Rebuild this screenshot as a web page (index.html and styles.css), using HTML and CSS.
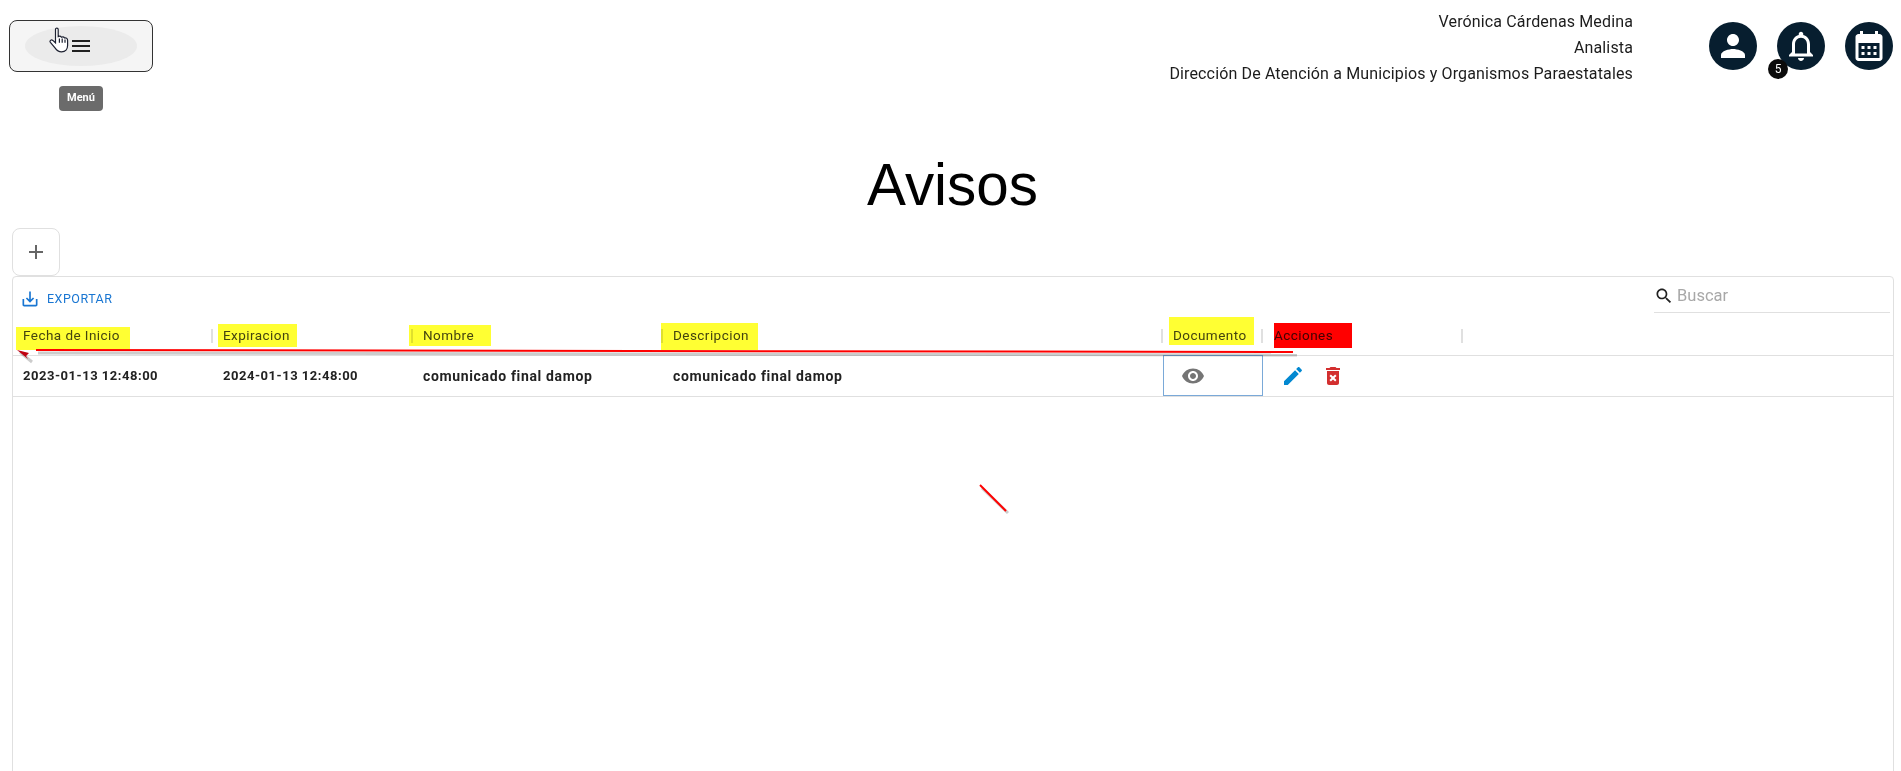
FILE: index.html
```html
<!DOCTYPE html>
<html lang="es">
<head>
    <meta charset="UTF-8">
    <meta name="viewport" content="width=device-width, initial-scale=1.0">
    <title>Avisos</title>
    <link rel="stylesheet" href="styles.css">
</head>
<body>
    <header class="topbar">
        <div class="menu-area">
            <button class="menu-button">
                <span class="menu-ripple">
                    <svg class="menu-icon" viewBox="0 0 24 24"><path d="M3 18h18v-2H3v2zm0-5h18v-2H3v2zm0-7v2h18V6H3z"/></svg>
                </span>
            </button>
            <span class="menu-tooltip">Menú</span>
        </div>
        <div class="user-info">
            <div>Verónica Cárdenas Medina</div>
            <div>Analista</div>
            <div>Dirección De Atención a Municipios y Organismos Paraestatales</div>
        </div>
        <div class="round-icons">
            <span class="round-icon">
                <svg viewBox="0 0 24 24"><path d="M12 12c2.21 0 4-1.79 4-4s-1.79-4-4-4-4 1.79-4 4 1.79 4 4 4zm0 2c-2.67 0-8 1.34-8 4v2h16v-2c0-2.66-5.33-4-8-4z"/></svg>
            </span>
            <span class="round-icon">
                <svg viewBox="0 0 24 24"><path d="M12 22c1.1 0 2-.9 2-2h-4c0 1.1.9 2 2 2zm6-6v-5c0-3.07-1.63-5.64-4.5-6.32V4c0-.83-.67-1.5-1.5-1.5s-1.5.67-1.5 1.5v.68C7.64 5.36 6 7.92 6 11v5l-2 2v1h16v-1l-2-2zm-2 1H8v-6c0-2.48 1.51-4.5 4-4.5s4 2.02 4 4.5v6z"/></svg>
                <span class="badge">5</span>
            </span>
            <span class="round-icon">
                <svg viewBox="0 0 24 24"><path d="M19 4h-1V2h-2v2H8V2H6v2H5c-1.1 0-2 .9-2 2v14c0 1.1.9 2 2 2h14c1.1 0 2-.9 2-2V6c0-1.1-.9-2-2-2zm0 16H5V10h14v10zM9 14H7v-2h2v2zm4 0h-2v-2h2v2zm4 0h-2v-2h2v2zm-8 4H7v-2h2v2zm4 0h-2v-2h2v2zm4 0h-2v-2h2v2z"/></svg>
            </span>
        </div>
    </header>

    <h1 class="page-title">Avisos</h1>

    <button class="add-button">
        <svg viewBox="0 0 24 24"><path d="M19 13h-6v6h-2v-6H5v-2h6V5h2v6h6v2z"/></svg>
    </button>

    <section class="card">
        <div class="toolbar">
            <a class="export-link">
                <svg viewBox="0 0 24 24"><path d="M19 12v7H5v-7H3v7c0 1.1.9 2 2 2h14c1.1 0 2-.9 2-2v-7h-2zm-6 .67l2.59-2.58L17 11.5l-5 5-5-5 1.41-1.41L11 12.67V3h2v9.67z"/></svg>
                EXPORTAR
            </a>
            <div class="search">
                <svg viewBox="0 0 24 24"><path d="M15.5 14h-.79l-.28-.27C15.41 12.59 16 11.11 16 9.5 16 5.91 13.09 3 9.5 3S3 5.91 3 9.5 5.91 16 9.5 16c1.61 0 3.09-.59 4.23-1.57l.27.28v.79l5 4.99L20.49 19l-4.99-5zm-6 0C7.01 14 5 11.99 5 9.5S7.01 5 9.5 5 14 7.01 14 9.5 11.99 14 9.5 14z"/></svg>
                <span>Buscar</span>
            </div>
        </div>
        <table class="data-table">
            <thead>
                <tr>
                    <th class="col-start">Fecha de Inicio</th>
                    <th class="col-expire">Expiracion</th>
                    <th class="col-name">Nombre</th>
                    <th class="col-desc">Descripcion</th>
                    <th class="col-doc">Documento</th>
                    <th class="col-actions">Acciones</th>
                    <th class="col-rest"></th>
                </tr>
            </thead>
            <tbody>
                <tr>
                    <td class="date-cell">2023-01-13 12:48:00</td>
                    <td class="date-cell">2024-01-13 12:48:00</td>
                    <td>comunicado final damop</td>
                    <td>comunicado final damop</td>
                    <td class="doc-cell">
                        <svg class="eye-icon" viewBox="0 0 24 24"><path d="M12 4.5C7 4.5 2.73 7.61 1 12c1.73 4.39 6 7.5 11 7.5s9.27-3.11 11-7.5c-1.73-4.39-6-7.5-11-7.5zM12 17c-2.76 0-5-2.24-5-5s2.24-5 5-5 5 2.24 5 5-2.24 5-5 5zm0-8c-1.66 0-3 1.34-3 3s1.34 3 3 3 3-1.34 3-3-1.34-3-3-3z"/></svg>
                    </td>
                    <td class="actions-cell">
                        <svg class="edit-icon" viewBox="0 0 24 24"><path d="M3 17.25V21h3.75L17.81 9.94l-3.75-3.75L3 17.25zM20.71 7.04c.39-.39.39-1.02 0-1.41l-2.34-2.34c-.39-.39-1.02-.39-1.41 0l-1.83 1.83 3.75 3.75 1.83-1.83z"/></svg>
                        <svg class="delete-icon" viewBox="0 0 24 24"><path d="M6 19c0 1.1.9 2 2 2h8c1.1 0 2-.9 2-2V7H6v12zm2.46-7.12l1.41-1.41L12 12.59l2.12-2.12 1.41 1.41L13.41 14l2.12 2.12-1.41 1.41L12 15.41l-2.12 2.12-1.41-1.41L10.59 14l-2.13-2.12zM15.5 4l-1-1h-5l-1 1H5v2h14V4z"/></svg>
                    </td>
                    <td></td>
                </tr>
            </tbody>
        </table>
    </section>

    <!-- Marks drawn by hand over the screenshot -->
    <svg class="annotations" viewBox="0 0 1901 771">
        <g class="marker">
            <rect x="16" y="327" width="114" height="23" fill="#ffff33"/>
            <rect x="218" y="324" width="79" height="23" fill="#ffff33"/>
            <rect x="409" y="325" width="82" height="21" fill="#ffff33"/>
            <rect x="661" y="323" width="97" height="27" fill="#ffff33"/>
            <rect x="1169" y="317" width="85" height="28" fill="#ffff33"/>
            <rect x="1274" y="323" width="78" height="25" fill="#ff0000"/>
        </g>
        <path class="pen-shadow" d="M38 353 L1297 355"/>
        <path class="pen-shadow" d="M982 488 L1008 513"/>
        <path class="pen-shadow" d="M20 352 L32 362"/>
        <path class="pen-line" d="M36 350 L1293 352"/>
        <path class="pen-line" d="M980 485 L1006 511"/>
        <path class="pen-tip" d="M17 350 L29 353 L26 356 L28 359 Z"/>
    </svg>

    <!-- Mouse pointer -->
    <svg class="hand-cursor" viewBox="0 0 20 26">
        <path d="M6.5 2.5 C6.5 0.6 9.2 0.6 9.2 2.5 L9.2 9.6 C10.6 9 11.8 9.2 12.4 10.2 C13.8 9.6 15 10 15.6 11 C17.4 10.6 18.6 11.6 18.6 13.4 L18.6 18.6 C18.6 22 16.4 24.8 12.6 24.8 C9.4 24.8 7.8 23.6 6.2 21.2 L1.4 15.4 C0.2 13.8 2.2 12.2 3.8 13.4 L6.5 15.8 Z"/>
        <path d="M10.4 11.5 V15.8 M13.2 11.5 V15.8 M16 12.4 V15.8"/>
    </svg>
</body>
</html>
```

FILE: styles.css
```css
html {
    height: 100%;
    overflow: hidden;
}
body {
    margin: 0;
    font-family: Roboto, "Liberation Sans", sans-serif;
    color: #212121;
    background-color: #ffffff;
    position: relative;
}

/* Top bar */
.topbar {
    display: flex;
    height: 111px;
    padding-left: 9px;
    padding-right: 8px;
}
.menu-area {
    display: flex;
    flex-direction: column;
    align-items: center;
    padding-top: 20px;
}
.menu-button {
    width: 144px;
    height: 52px;
    padding: 5px 15px;
    background-color: #f5f5f5;
    border: 1px solid #333;
    border-radius: 8px;
    box-sizing: border-box;
}
.menu-ripple {
    display: flex;
    align-items: center;
    justify-content: center;
    height: 40px;
    margin-top: -1px;
    background-color: #ebebeb;
    border-radius: 50%;
}
.menu-icon {
    width: 24px;
    height: 24px;
    fill: #212121;
}
.menu-tooltip {
    margin-top: 14px;
    width: 44px;
    height: 25px;
    line-height: 24px;
    text-align: center;
    font-size: 11px;
    font-weight: 700;
    color: white;
    background-color: #6b6b6b;
    border-radius: 4px;
}
.user-info {
    margin-left: auto;
    padding-top: 9px;
    font-size: 16px;
    letter-spacing: 0.14px;
    line-height: 26px;
    text-align: right;
    color: #1c1c1c;
}
.round-icons {
    display: flex;
    gap: 20px;
    margin-left: 76px;
    padding-top: 22px;
}
.round-icon {
    display: flex;
    align-items: center;
    justify-content: center;
    position: relative;
    width: 48px;
    height: 48px;
    background-color: #071e2f;
    border-radius: 50%;
}
.round-icon svg {
    width: 36px;
    height: 36px;
    fill: white;
}
.badge {
    position: absolute;
    left: -9px;
    bottom: -9px;
    width: 20px;
    height: 20px;
    line-height: 20px;
    text-align: center;
    font-size: 12px;
    color: white;
    background-color: #0b0b0b;
    border-radius: 50%;
}

.page-title {
    margin: 41px 0 0;
    padding-left: 4px;
    font-family: "Liberation Sans", Arial, sans-serif;
    font-size: 58.4px;
    font-weight: 400;
    line-height: 66px;
    text-align: center;
    color: #000;
}

.add-button {
    display: flex;
    align-items: center;
    justify-content: center;
    width: 48px;
    height: 48px;
    margin: 10px 0 0 12px;
    padding: 0;
    background-color: white;
    border: 1px solid #e0e0e0;
    border-radius: 8px;
}
.add-button svg {
    width: 24px;
    height: 24px;
    fill: #666;
}

/* Table card */
.card {
    height: 600px;
    margin: 0 7px 0 12px;
    border: 1px solid #e0e0e0;
    border-radius: 4px;
    box-sizing: border-box;
}
.toolbar {
    display: flex;
    justify-content: space-between;
    height: 43px;
}
.export-link {
    display: flex;
    align-items: center;
    gap: 7px;
    height: 43px;
    padding-left: 7px;
    font-size: 12.5px;
    letter-spacing: 0.5px;
    color: #1976d2;
}
.export-link svg {
    width: 20px;
    height: 20px;
    fill: #1976d2;
}
.search {
    display: flex;
    align-items: center;
    gap: 3px;
    width: 236px;
    height: 36px;
    margin-right: 3px;
    padding-top: 2px;
    box-sizing: border-box;
    border-bottom: 1px solid #e0e0e0;
    font-size: 16.5px;
    color: #a8a8a8;
}
.search svg {
    width: 20px;
    height: 20px;
    fill: #212121;
}
.data-table {
    width: 100%;
    border-collapse: collapse;
    table-layout: fixed;
}
.col-start, .col-expire, .col-actions { width: 200px; }
.col-name { width: 250px; }
.col-desc { width: 500px; }
.col-doc { width: 100px; }
.data-table th {
    position: relative;
    height: 35px;
    padding: 0 0 5px 10px;
    box-sizing: border-box;
    font-size: 13.5px;
    font-weight: 400;
    letter-spacing: 0.45px;
    text-align: left;
    color: #444;
    border-bottom: 1px solid #e0e0e0;
}
.data-table th.col-actions {
    padding-left: 11px;
}
.data-table th:not(.col-rest)::after {
    content: "";
    position: absolute;
    right: 0;
    top: 9px;
    width: 2px;
    height: 14px;
    background-color: #e0e0e0;
}
.data-table td {
    height: 41px;
    padding: 0 0 0 10px;
    box-sizing: border-box;
    font-size: 14px;
    font-weight: 700;
    letter-spacing: 0.65px;
    color: #222;
    border-bottom: 1px solid #e0e0e0;
}
.data-table td.date-cell {
    font-size: 13px;
    letter-spacing: 0.52px;
}
.data-table td.doc-cell {
    padding-left: 18px;
    outline: 1px solid #7aa9d8;
    outline-offset: -1px;
}
.data-table td.actions-cell {
    padding-left: 18px;
}
.eye-icon, .edit-icon, .delete-icon {
    display: inline-block;
    vertical-align: middle;
    width: 24px;
    height: 24px;
}
.eye-icon { fill: #757575; }
.edit-icon { fill: #0288d1; }
.delete-icon {
    margin-left: 12px;
    fill: #d32f2f;
}

/* Overlays */
.annotations {
    position: absolute;
    left: 0;
    top: 0;
    width: 1901px;
    height: 771px;
    pointer-events: none;
}
.marker {
    mix-blend-mode: multiply;
}
.pen-line {
    fill: none;
    stroke: #ff0000;
    stroke-width: 2;
}
.pen-shadow {
    fill: none;
    stroke: #000;
    stroke-opacity: 0.2;
    stroke-width: 3;
}
.pen-tip {
    fill: #c00010;
}
.hand-cursor {
    position: absolute;
    left: 49px;
    top: 27px;
    width: 20px;
    height: 26px;
}
.hand-cursor path {
    fill: white;
    stroke: #1c2030;
    stroke-width: 1.2;
}
```
